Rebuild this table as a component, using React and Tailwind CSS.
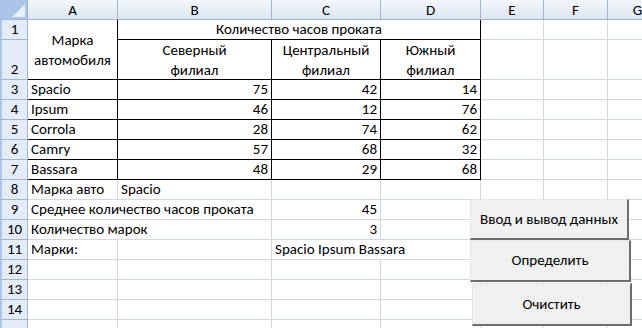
import React from 'react';
import clsx from 'clsx';

const rows = [
  { n: 3, name: 'Spacio', b: 75, c: 42, d: 14 },
  { n: 4, name: 'Ipsum', b: 46, c: 12, d: 76 },
  { n: 5, name: 'Corrola', b: 28, c: 74, d: 62 },
  { n: 6, name: 'Camry', b: 57, c: 68, d: 32 },
  { n: 7, name: 'Bassara', b: 48, c: 29, d: 68 },
];

const cols = [
  { l: 'A', w: 'w-[90px]' },
  { l: 'B', w: 'w-[154px]' },
  { l: 'C', w: 'w-[109px]' },
  { l: 'D', w: 'w-[100px]' },
  { l: 'E', w: 'w-[63px]' },
  { l: 'F', w: 'w-[64px]' },
  { l: 'G', w: 'w-[60px]' },
];

// one spreadsheet cell, text sits at the bottom like in Excel
const Cell = ({ w, h = 'h-[20px]', black, right, center, children, className }) => (
  <div
    className={clsx(
      'flex shrink-0 items-end overflow-visible whitespace-nowrap border-r border-b px-[3px] pb-[1px] leading-[18px]',
      w,
      h,
      black ? 'border-black' : 'border-[#d0d7e5]',
      right && 'justify-end',
      center && 'justify-center',
      className
    )}
  >
    {children}
  </div>
);

const RowHead = ({ n, h = 'h-[20px]' }) => (
  <div
    className={clsx(
      'flex w-[28px] shrink-0 items-end justify-center border-r border-b border-l-2 border-r-[#9eb6ce] border-b-[#9eb6ce] border-l-[#a9c4e8] bg-[#e4ecf7] pb-[1px] leading-[18px]',
      h
    )}
  >
    {n}
  </div>
);

const Empty = ({ from = 4 }) =>
  cols.slice(from).map((c) => <Cell key={c.l} w={c.w} />);

const Button = ({ className, children }) => (
  <button
    className={clsx(
      'absolute flex items-center justify-center border-t border-l border-r-2 border-b-2 border-t-[#e6e6e6] border-l-[#e6e6e6] border-r-[#6d6d6d] border-b-[#6d6d6d] bg-[#f0f0f0] text-black',
      className
    )}
  >
    {children}
  </button>
);

export default function App() {
  return (
    <div
      className="relative h-[328px] w-[642px] overflow-hidden bg-white text-[15px] text-black"
      style={{ fontFamily: 'Calibri, Carlito, Lato, "Open Sans", sans-serif' }}
    >
      {/* column headers */}
      <div className="flex h-[20px]">
        <div className="relative w-[28px] shrink-0 border-r border-b border-l-2 border-r-[#9eb6ce] border-b-[#9eb6ce] border-l-[#a9c4e8] bg-[#aac5e9]">
          <svg className="absolute right-[2px] bottom-[2px]" width="13" height="13" viewBox="0 0 13 13">
            <polygon points="13,0 13,13 0,13" fill="#eaf1fa" />
          </svg>
        </div>
        {cols.map((c) => (
          <div
            key={c.l}
            className={clsx(
              'flex shrink-0 items-center justify-center border-r border-b border-r-[#9eb6ce] border-b-[#9eb6ce] bg-gradient-to-b from-[#f3f7fc] to-[#dde6f2] leading-[18px]',
              c.w
            )}
          >
            {c.l}
          </div>
        ))}
      </div>

      {/* rows 1-2 with merged header cells */}
      <div className="flex h-[60px]">
        <div className="flex flex-col">
          <RowHead n={1} />
          <RowHead n={2} h="h-[40px]" />
        </div>
        <div className="flex h-[60px] w-[90px] shrink-0 items-center justify-center border-r border-b border-black text-center leading-[20px]">
          Марка
          <br />
          автомобиля
        </div>
        <div className="flex flex-col">
          <div className="flex h-[20px] w-[363px] items-end justify-center border-r border-b border-black pb-[1px] leading-[18px]">
            Количество часов проката
          </div>
          <div className="flex">
            <div className="flex h-[40px] w-[154px] items-center justify-center border-r border-b border-black text-center leading-[20px]">
              Северный
              <br />
              филиал
            </div>
            <div className="flex h-[40px] w-[109px] items-center justify-center border-r border-b border-black text-center leading-[20px]">
              Центральный
              <br />
              филиал
            </div>
            <div className="flex h-[40px] w-[100px] items-center justify-center border-r border-b border-black text-center leading-[20px]">
              Южный
              <br />
              филиал
            </div>
          </div>
        </div>
        {cols.slice(4).map((c) => (
          <div key={c.l} className="flex flex-col">
            <Cell w={c.w} />
            <Cell w={c.w} h="h-[40px]" />
          </div>
        ))}
      </div>

      {/* data table */}
      {rows.map((r) => (
        <div key={r.n} className="flex h-[20px]">
          <RowHead n={r.n} />
          <Cell w="w-[90px]" black>{r.name}</Cell>
          <Cell w="w-[154px]" black right>{r.b}</Cell>
          <Cell w="w-[109px]" black right>{r.c}</Cell>
          <Cell w="w-[100px]" black right>{r.d}</Cell>
          <Empty />
        </div>
      ))}

      <div className="flex h-[20px]">
        <RowHead n={8} />
        <Cell w="w-[90px]">Марка авто</Cell>
        <Cell w="w-[154px]">Spacio</Cell>
        <Cell w="w-[109px]" />
        <Cell w="w-[100px]" />
        <Empty />
      </div>

      <div className="flex h-[20px]">
        <RowHead n={9} />
        <Cell w="w-[244px]">Среднее количество часов проката</Cell>
        <Cell w="w-[109px]" right>45</Cell>
        <Cell w="w-[100px]" />
        <Empty />
      </div>

      <div className="flex h-[20px]">
        <RowHead n={10} />
        <Cell w="w-[244px]">Количество марок</Cell>
        <Cell w="w-[109px]" right>3</Cell>
        <Cell w="w-[100px]" />
        <Empty />
      </div>

      <div className="flex h-[20px]">
        <RowHead n={11} />
        <Cell w="w-[90px]">Марки:</Cell>
        <Cell w="w-[154px]" />
        <Cell w="w-[209px]">Spacio Ipsum Bassara</Cell>
        <Empty />
      </div>

      {[12, 13, 14].map((n) => (
        <div key={n} className="flex h-[20px]">
          <RowHead n={n} />
          <Empty from={0} />
        </div>
      ))}
      <div className="flex h-[20px]">
        <RowHead n="" />
        <Empty from={0} />
      </div>

      <Button className="top-[199px] left-[470px] h-[41px] w-[159px]">Ввод и вывод данных</Button>
      <Button className="top-[240px] left-[470px] h-[42px] w-[161px]">Определить</Button>
      <Button className="top-[283px] left-[472px] h-[43px] w-[160px]">Очистить</Button>
    </div>
  );
}
